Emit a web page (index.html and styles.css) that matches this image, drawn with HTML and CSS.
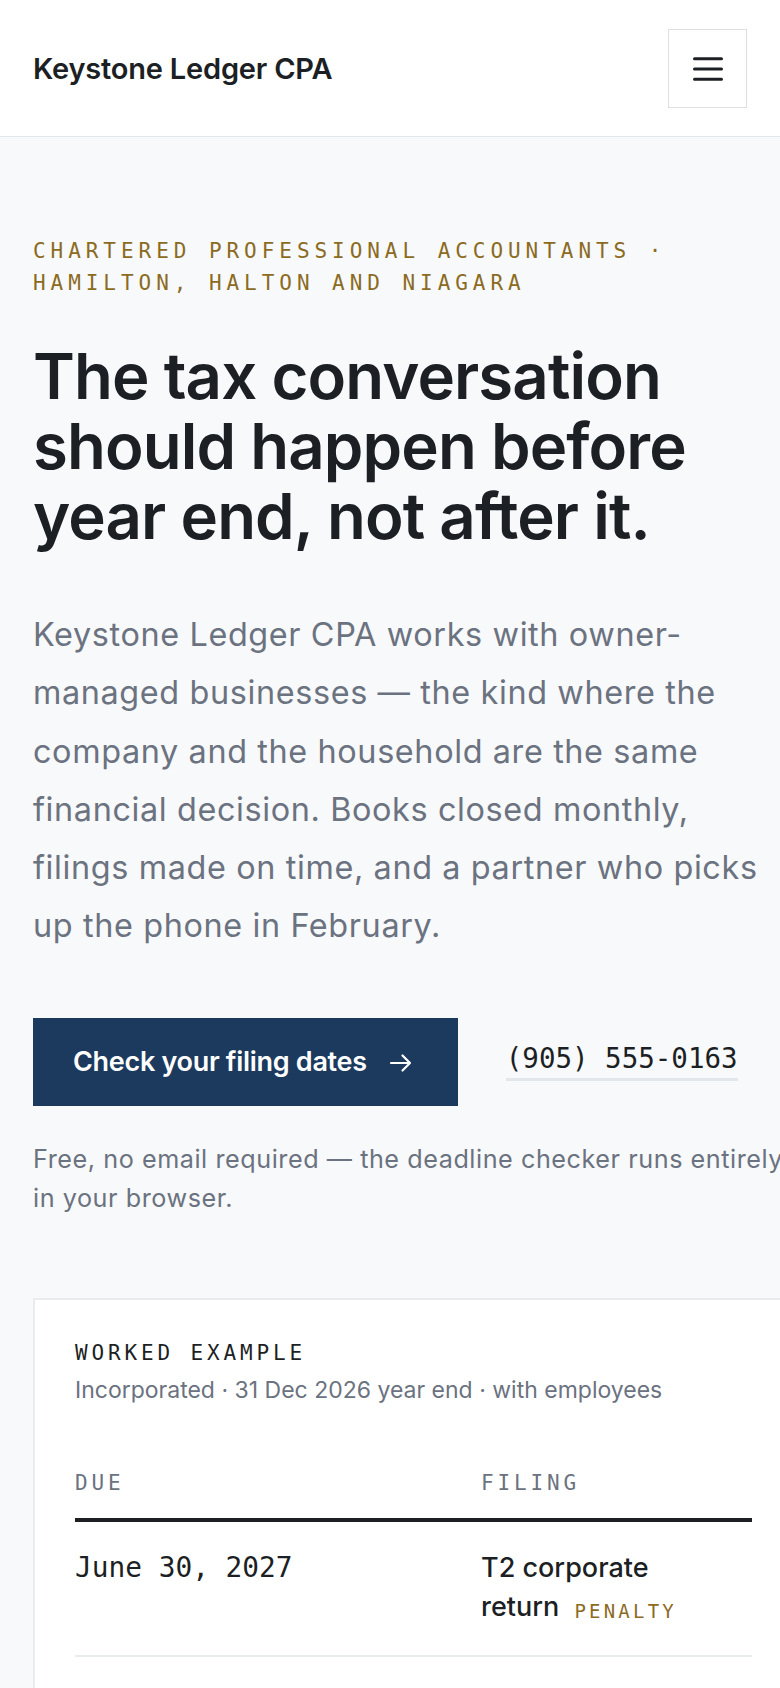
FILE: index.html
```html
<!DOCTYPE html>
<html lang="en">
<head>
<meta charset="utf-8">
<meta name="viewport" content="width=device-width, initial-scale=1">
<title>Keystone Ledger CPA</title>
<link rel="stylesheet" href="styles.css">
</head>
<body>
<header class="site-header">
  <a class="logo" href="#">Keystone Ledger CPA</a>
  <button class="menu-btn" type="button" aria-label="Open menu">
    <svg width="30" height="24" viewBox="0 0 30 24" aria-hidden="true">
      <path d="M1.5 1.7h27M1.5 12h27M1.5 22.3h27" fill="none" stroke="#1c1f24" stroke-width="3" stroke-linecap="round"/>
    </svg>
  </button>
</header>
<main class="hero">
  <div class="hero-inner">
    <p class="eyebrow">Chartered Professional Accountants · Hamilton, Halton and Niagara</p>
    <h1 class="headline">The tax conversation should happen before year end, not after it.</h1>
    <p class="lede">Keystone Ledger CPA works with owner-managed businesses — the kind where the company and the household are the same financial decision. Books closed monthly, filings made on time, and a partner who picks up the phone in February.</p>
    <div class="cta-row">
      <a class="btn-primary" href="#">
        <span>Check your filing dates</span>
        <svg class="arrow" width="24" height="20" viewBox="0 0 24 20" aria-hidden="true">
          <path d="M2 10h19M13.5 2.5 21 10l-7.5 7.5" fill="none" stroke="#ffffff" stroke-width="2.2" stroke-linecap="round" stroke-linejoin="round"/>
        </svg>
      </a>
      <a class="phone" href="#">(905) 555-0163</a>
    </div>
    <p class="note">Free, no email required — the deadline checker runs entirely in your browser.</p>

    <section class="card">
      <h2 class="card-title">Worked example</h2>
      <p class="card-sub">Incorporated · 31 Dec 2026 year end · with employees</p>
      <table class="deadlines">
        <thead>
          <tr><th class="col-due">Due</th><th>Filing</th></tr>
        </thead>
        <tbody>
          <tr>
            <td class="date">June 30, 2027</td>
            <td class="filing"><span class="filing-name">T2 corporate return <span class="tag">Penalty</span></span></td>
          </tr>
        </tbody>
      </table>
    </section>
  </div>
</main>
</body>
</html>
```
FILE: styles.css
```css
html, body {
  margin: 0;
  padding: 0;
  overflow-x: hidden;
}
body {
  background: #f8f9fb;
  color: #1c1f24;
  font-family: "Inter", "Noto Sans", "Liberation Sans", sans-serif;
}
a { text-decoration: none; color: inherit; }

.site-header {
  height: 137px;
  box-sizing: border-box;
  background: #ffffff;
  border-bottom: 1px solid #e3e6ea;
  padding: 0 33px;
  display: flex;
  align-items: center;
  justify-content: space-between;
}
.logo {
  font-size: 29px;
  font-weight: 600;
  letter-spacing: -0.2px;
  color: #1c1f24;
}
.menu-btn {
  width: 79px;
  height: 79px;
  box-sizing: border-box;
  border: 1px solid #dcdfe3;
  background: #ffffff;
  display: flex;
  align-items: center;
  justify-content: center;
  padding: 0;
  margin-top: 1px;
}

.hero {
  padding: 98px 0 0 33px;
}
.hero-inner {
  width: 759px;
}
.eyebrow {
  margin: 0;
  font-family: "DejaVu Sans Mono", "Liberation Mono", monospace;
  font-size: 21px;
  line-height: 32px;
  letter-spacing: 4.95px;
  text-transform: uppercase;
  color: #8b6b1f;
}
.headline {
  margin: 42px 0 0;
  max-width: 720px;
  font-size: 63.5px;
  line-height: 70px;
  font-weight: 600;
  letter-spacing: -0.9px;
  color: #1c1f24;
}
.lede {
  margin: 55px 0 0;
  font-size: 32.4px;
  line-height: 58.3px;
  letter-spacing: 0.62px;
  color: #6b7280;
}
.cta-row {
  margin-top: 62px;
  display: flex;
  align-items: center;
  gap: 48px;
}
.btn-primary {
  height: 88px;
  box-sizing: border-box;
  padding: 0 45px 0 40px;
  background: #1c3a5d;
  color: #ffffff;
  display: flex;
  align-items: center;
  gap: 22px;
  font-size: 27px;
  font-weight: 600;
  letter-spacing: -0.3px;
}
.arrow { display: block; margin-top: 2px; }
.phone {
  font-family: "DejaVu Sans Mono", "Liberation Mono", monospace;
  font-size: 27.5px;
  line-height: 33px;
  color: #1c1f24;
  padding-bottom: 3px;
  border-bottom: 3px solid #e3e6ea;
}
.note {
  margin: 34px 0 0;
  font-size: 25.2px;
  line-height: 39px;
  letter-spacing: 0.55px;
  color: #6b7280;
}

.card {
  margin-top: 80px;
  background: #ffffff;
  border: 2px solid #e9ebee;
  padding: 41px 38px 40px 40px;
}
.card-title {
  margin: 0;
  font-family: "DejaVu Sans Mono", "Liberation Mono", monospace;
  font-size: 21px;
  line-height: 24px;
  font-weight: 400;
  letter-spacing: 3.85px;
  text-transform: uppercase;
  color: #1c1f24;
}
.card-sub {
  margin: 8px 0 0;
  font-size: 23px;
  line-height: 34px;
  color: #6b7280;
}
.deadlines {
  margin-top: 64px;
  width: 100%;
  border-collapse: collapse;
}
.deadlines th {
  text-align: left;
  padding: 0 0 23px;
  font-family: "DejaVu Sans Mono", "Liberation Mono", monospace;
  font-size: 21px;
  line-height: 24px;
  font-weight: 400;
  letter-spacing: 3.85px;
  text-transform: uppercase;
  color: #6b7280;
  border-bottom: 4px solid #1c1f24;
}
.deadlines .col-due { width: 406px; }
.deadlines td {
  vertical-align: top;
  padding: 26px 0 29px;
  border-bottom: 2px solid #e9ebee;
}
.date {
  font-family: "DejaVu Sans Mono", "Liberation Mono", monospace;
  font-size: 27.8px;
  line-height: 39px;
  color: #1c1f24;
}
.filing {
  font-size: 27px;
  line-height: 39px;
  font-weight: 500;
  color: #1c1f24;
}
.filing-name {
  display: block;
  max-width: 210px;
}
.tag {
  margin-left: 8px;
  font-family: "DejaVu Sans Mono", "Liberation Mono", monospace;
  font-size: 19px;
  line-height: 20px;
  font-weight: 400;
  letter-spacing: 3.2px;
  text-transform: uppercase;
  color: #8b6b1f;
  white-space: nowrap;
  vertical-align: -2px;
}
```
